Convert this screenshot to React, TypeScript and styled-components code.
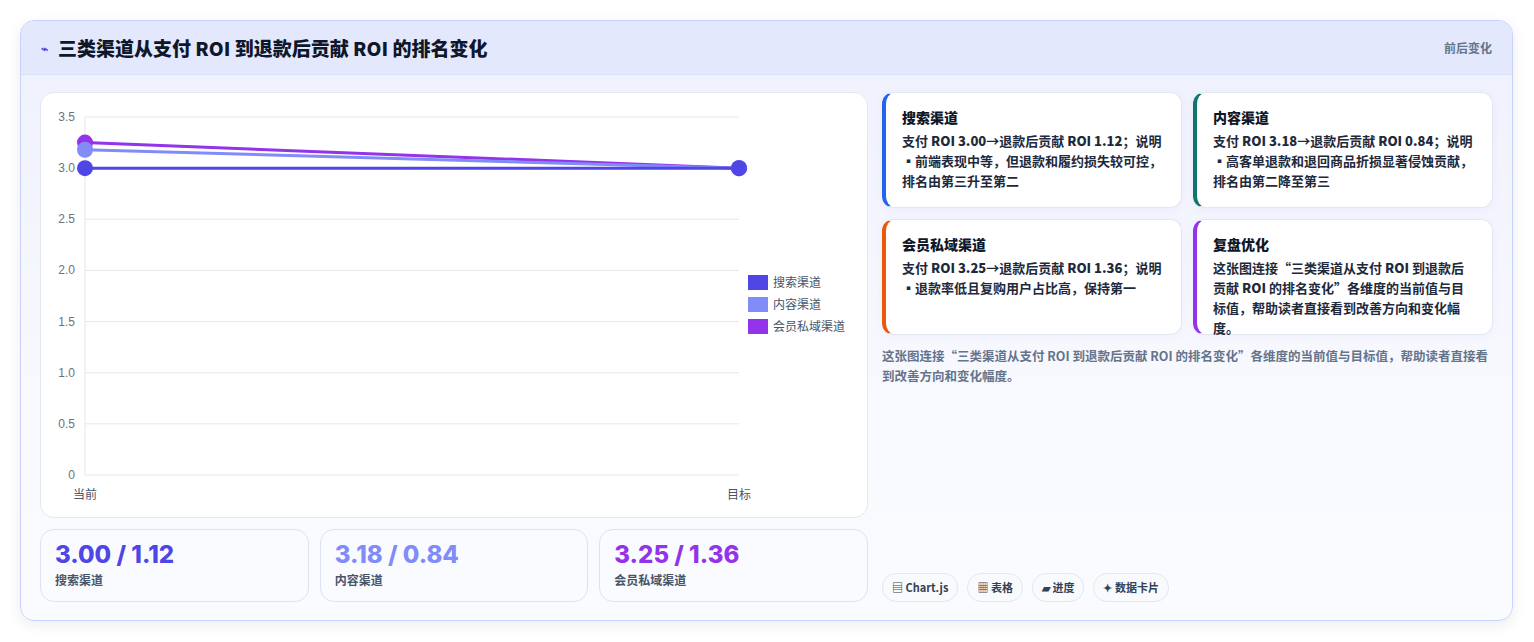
import React from "react";
import styled, { createGlobalStyle } from "styled-components";

const G = createGlobalStyle`
  body{margin:0;background:#fff;font-family:"Noto Sans CJK SC",Inter,sans-serif;color:#0f172a;}
`;
const Page = styled.div`padding:20px 20px 20px 20px;`;
const Card = styled.div`
  width:1493px;height:601px;box-sizing:border-box;border:1px solid #c7d2fe;border-radius:14px;
  background:linear-gradient(180deg,#eef0fd 0%,#f8f9fe 60%,#fafbff 100%);overflow:hidden;
  box-shadow:0 4px 14px rgba(15,23,42,0.08);display:flex;flex-direction:column;
`;
const Header = styled.div`
  height:55px;box-sizing:border-box;padding:0 20px;display:flex;align-items:center;justify-content:space-between;
  background:#e3e8fd;border-bottom:1px solid #dde3f6;
`;
const Title = styled.h1`margin:0;font-size:19px;font-weight:800;display:flex;align-items:center;gap:10px;`;
const Bolt = styled.span`color:#4f46e5;font-size:12px;`;
const Tag = styled.span`font-size:12px;font-weight:700;color:#64748b;`;
const Body = styled.div`flex:1;display:flex;gap:14px;padding:17px 19px 18px 19px;`;
const Left = styled.div`width:828px;display:flex;flex-direction:column;gap:11px;`;
const ChartBox = styled.div`height:426px;box-sizing:border-box;background:#fff;border:1px solid #e2e8f0;border-radius:14px;position:relative;`;
const Stats = styled.div`display:grid;grid-template-columns:repeat(3,1fr);gap:11px;`;
const Stat = styled.div`height:73px;box-sizing:border-box;border:1px solid #dbe3f0;border-radius:14px;background:#fafbff;padding:8px 14px;`;
const StatVal = styled.div<{c:string}>`font-family:Inter,sans-serif;font-size:24px;font-weight:800;color:${p=>p.c};line-height:34px;`;
const StatLbl = styled.div`font-size:12px;color:#475569;font-weight:600;line-height:16px;`;
const Right = styled.div`flex:1;display:flex;flex-direction:column;`;
const Grid = styled.div`display:grid;grid-template-columns:1fr 1fr;gap:11px;`;
const Note = styled.div<{c:string}>`
  height:116px;box-sizing:border-box;background:#fff;border:1px solid #e2e8f0;border-left:4px solid ${p=>p.c};
  border-radius:12px;padding:14px 16px 0 16px;box-shadow:0 2px 8px rgba(99,102,241,0.06);
`;
const NoteT = styled.div`font-size:14px;font-weight:800;margin-bottom:4px;line-height:20px;`;
const NoteP = styled.div`font-size:13px;line-height:20px;font-weight:600;color:#1e293b;`;
const Desc = styled.p`margin:11px 0 0;font-size:12.5px;line-height:20px;font-weight:600;color:#64748b;`;
const Chips = styled.div`margin-top:auto;display:flex;gap:9px;`;
const Chip = styled.span`font-size:11px;font-weight:700;color:#334155;background:#f8fafc;border:1px solid #e2e8f0;border-radius:14px;padding:5px 9px;line-height:17px;`;
const Legend = styled.div`position:absolute;left:707px;top:181px;display:flex;flex-direction:column;gap:6px;`;
const LI = styled.div`display:flex;align-items:center;gap:5px;font-size:12px;color:#475569;line-height:16px;`;
const Sw = styled.span<{c:string}>`width:20px;height:15px;background:${p=>p.c};`;

const X0=44,X1=698,Y0=382,Y35=24;
const y=(v:number)=>Y0-(v/3.5)*(Y0-Y35);
const series=[{n:"搜索渠道",c:"#4f46e5",a:3.0},{n:"内容渠道",c:"#818cf8",a:3.18},{n:"会员私域渠道",c:"#9333ea",a:3.25}];

export default function App(){
  const ticks=[0,0.5,1,1.5,2,2.5,3,3.5];
  return <Page><G/><Card>
    <Header><Title><Bolt>⌁</Bolt>三类渠道从支付 ROI 到退款后贡献 ROI 的排名变化</Title><Tag>前后变化</Tag></Header>
    <Body>
      <Left>
        <ChartBox>
          <svg width="826" height="424" style={{position:"absolute",left:0,top:0}}>
            {ticks.map(t=><g key={t}>
              <line x1={X0} x2={X1} y1={y(t)} y2={y(t)} stroke="#e5e7eb"/>
              <text x={X0-10} y={y(t)+4} textAnchor="end" fontSize="12" fill="#6b7280" fontFamily="Liberation Sans">{t===0?"0":t.toFixed(1)}</text>
            </g>)}
            <line x1={X0} x2={X0} y1={Y35} y2={Y0} stroke="#e5e7eb"/>
            <text x={X0} y={Y0+24} textAnchor="middle" fontSize="12" fill="#4b5563">当前</text>
            <text x={X1} y={Y0+24} textAnchor="middle" fontSize="12" fill="#4b5563">目标</text>
            {[...series].reverse().map(s=><g key={s.n}>
              <line x1={X0} y1={y(s.a)} x2={X1} y2={y(3)} stroke={s.c} strokeWidth="3"/>
              <circle cx={X0} cy={y(s.a)} r="8" fill={s.c}/>
              <circle cx={X1} cy={y(3)} r="8" fill={s.c}/>
            </g>)}
          </svg>
          <Legend>{series.map(s=><LI key={s.n}><Sw c={s.c}/>{s.n}</LI>)}</Legend>
        </ChartBox>
        <Stats>
          <Stat><StatVal c="#4f46e5">3.00 / 1.12</StatVal><StatLbl>搜索渠道</StatLbl></Stat>
          <Stat><StatVal c="#818cf8">3.18 / 0.84</StatVal><StatLbl>内容渠道</StatLbl></Stat>
          <Stat><StatVal c="#9333ea">3.25 / 1.36</StatVal><StatLbl>会员私域渠道</StatLbl></Stat>
        </Stats>
      </Left>
      <Right>
        <Grid>
          <Note c="#2563eb"><NoteT>搜索渠道</NoteT><NoteP>支付 <b>ROI 3.00</b>→退款后贡献 <b>ROI 1.12</b>；说明▪前端表现中等，但退款和履约损失较可控，排名由第三升至第二</NoteP></Note>
          <Note c="#0f766e"><NoteT>内容渠道</NoteT><NoteP>支付 <b>ROI 3.18</b>→退款后贡献 <b>ROI 0.84</b>；说明▪高客单退款和退回商品折损显著侵蚀贡献，排名由第二降至第三</NoteP></Note>
          <Note c="#ea580c"><NoteT>会员私域渠道</NoteT><NoteP>支付 <b>ROI 3.25</b>→退款后贡献 <b>ROI 1.36</b>；说明▪退款率低且复购用户占比高，保持第一</NoteP></Note>
          <Note c="#9333ea"><NoteT>复盘优化</NoteT><NoteP>这张图连接“三类渠道从支付 <b>ROI</b> 到退款后贡献 <b>ROI</b> 的排名变化”各维度的当前值与目标值，帮助读者直接看到改善方向和变化幅度。</NoteP></Note>
        </Grid>
        <Desc>这张图连接“三类渠道从支付 ROI 到退款后贡献 ROI 的排名变化”各维度的当前值与目标值，帮助读者直接看到改善方向和变化幅度。</Desc>
        <Chips><Chip>▤ Chart.js</Chip><Chip>▦ 表格</Chip><Chip>▰ 进度</Chip><Chip>✦ 数据卡片</Chip></Chips>
      </Right>
    </Body>
  </Card></Page>;
}
